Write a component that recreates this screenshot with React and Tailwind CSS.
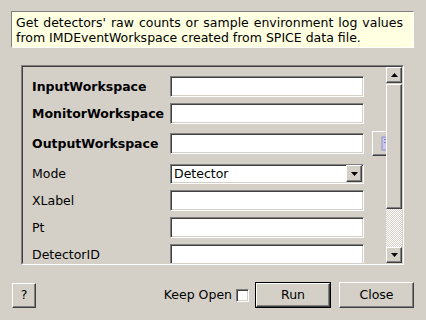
import React from "react";

const raised =
  "border border-t-white border-l-white border-r-[#404040] border-b-[#404040] shadow-[inset_-1px_-1px_0_#808080] bg-[#d4d0c8]";
const sunken =
  "border border-t-[#808080] border-l-[#808080] border-r-white border-b-white shadow-[inset_1px_1px_0_#404040,inset_-1px_-1px_0_#d4d0c8] bg-white";

function Tri({ down }) {
  return (
    <svg width="7" height="4" viewBox="0 0 7 4">
      {down ? (
        <polygon points="0,0 7,0 3.5,4" fill="#000" />
      ) : (
        <polygon points="0,4 7,4 3.5,0" fill="#000" />
      )}
    </svg>
  );
}

function Row({ label, bold, h = "h-[27px]", children }) {
  return (
    <div className={`flex items-center ${h}`}>
      <div className={`w-[138px] shrink-0 pt-[2px] ${bold ? "font-bold" : ""}`}>{label}</div>
      {children}
    </div>
  );
}

function Input() {
  return <div className={`w-[194px] h-[21px] shrink-0 ${sunken}`} />;
}

export default function App() {
  return (
    <div
      className="w-[426px] h-[320px] bg-[#d4d0c8] text-[12.5px] text-black flex flex-col pt-[11px] overflow-hidden"
      style={{ fontFamily: '"DejaVu Sans", sans-serif' }}
    >
      <div className="ml-[11px] w-[403px] h-[37px] bg-[#ffffe1] border border-t-[#808080] border-l-[#808080] border-r-white border-b-white pl-[4px] pr-[10px] pt-[3px] leading-[15px] [text-align:justify] [text-align-last:left]">
        Get detectors' raw counts or sample environment log values from IMDEventWorkspace created from SPICE data file.
      </div>

      <div className="mt-[17px] ml-[21px] w-[383px] h-[200px] border border-t-[#808080] border-l-[#808080] border-r-white border-b-white">
        <div className="w-full h-full border border-t-[#404040] border-l-[#404040] border-r-[#d4d0c8] border-b-[#d4d0c8] flex">
          <div className="flex-1 overflow-hidden pt-[6px] pl-[9px]">
            <Row label="InputWorkspace" bold>
              <Input />
            </Row>
            <Row label="MonitorWorkspace" bold>
              <Input />
            </Row>
            <Row label="OutputWorkspace" bold h="h-[33px]">
              <Input />
              <div className={`ml-[8px] w-[26px] h-[25px] shrink-0 flex items-center pl-[8px] ${raised}`}>
                <svg width="14" height="15" viewBox="0 0 14 15">
                  <rect x="1" y="1" width="10" height="13" fill="#c8c8f0" stroke="#9090c0" strokeWidth="1" />
                  <rect x="3" y="3" width="5" height="1" fill="#8080b0" />
                  <rect x="3" y="6" width="5" height="1" fill="#8080b0" />
                  <rect x="7" y="9" width="2" height="5" fill="#30b030" />
                </svg>
              </div>
            </Row>
            <Row label="Mode">
              <div className={`w-[194px] h-[20px] shrink-0 flex items-center justify-between pl-[3px] pr-[1px] ${sunken}`}>
                <span className="pt-[1px]">Detector</span>
                <div className={`w-[16px] h-[17px] flex items-center justify-center ${raised}`}>
                  <Tri down />
                </div>
              </div>
            </Row>
            <Row label="XLabel">
              <Input />
            </Row>
            <Row label="Pt">
              <Input />
            </Row>
            <Row label="DetectorID">
              <Input />
            </Row>
          </div>
          <div className="w-[16px] h-full flex flex-col shrink-0">
            <div className={`h-[16px] flex items-center justify-center shrink-0 ${raised}`}>
              <Tri />
            </div>
            <div className={`h-[125px] mt-[1px] shrink-0 ${raised}`} />
            <div className="flex-1 bg-[repeating-conic-gradient(#ffffff_0_25%,#d4d0c8_0_50%)] bg-[length:2px_2px]" />
            <div className={`h-[16px] flex items-center justify-center shrink-0 ${raised}`}>
              <Tri down />
            </div>
          </div>
        </div>
      </div>

      <div className="mt-[17px] h-[26px] flex items-center pr-[12px]">
        <div className={`ml-[12px] w-[24px] h-[25px] flex items-center justify-center ${raised}`}>?</div>
        <div className="flex-1" />
        <span>Keep Open</span>
        <div className={`ml-[4px] w-[13px] h-[13px] ${sunken}`} />
        <div className="ml-[6px] w-[76px] h-[26px] border border-black">
          <div className={`w-full h-full flex items-center justify-center ${raised}`}>Run</div>
        </div>
        <div className={`ml-[8px] w-[75px] h-[26px] flex items-center justify-center ${raised}`}>Close</div>
      </div>
    </div>
  );
}
